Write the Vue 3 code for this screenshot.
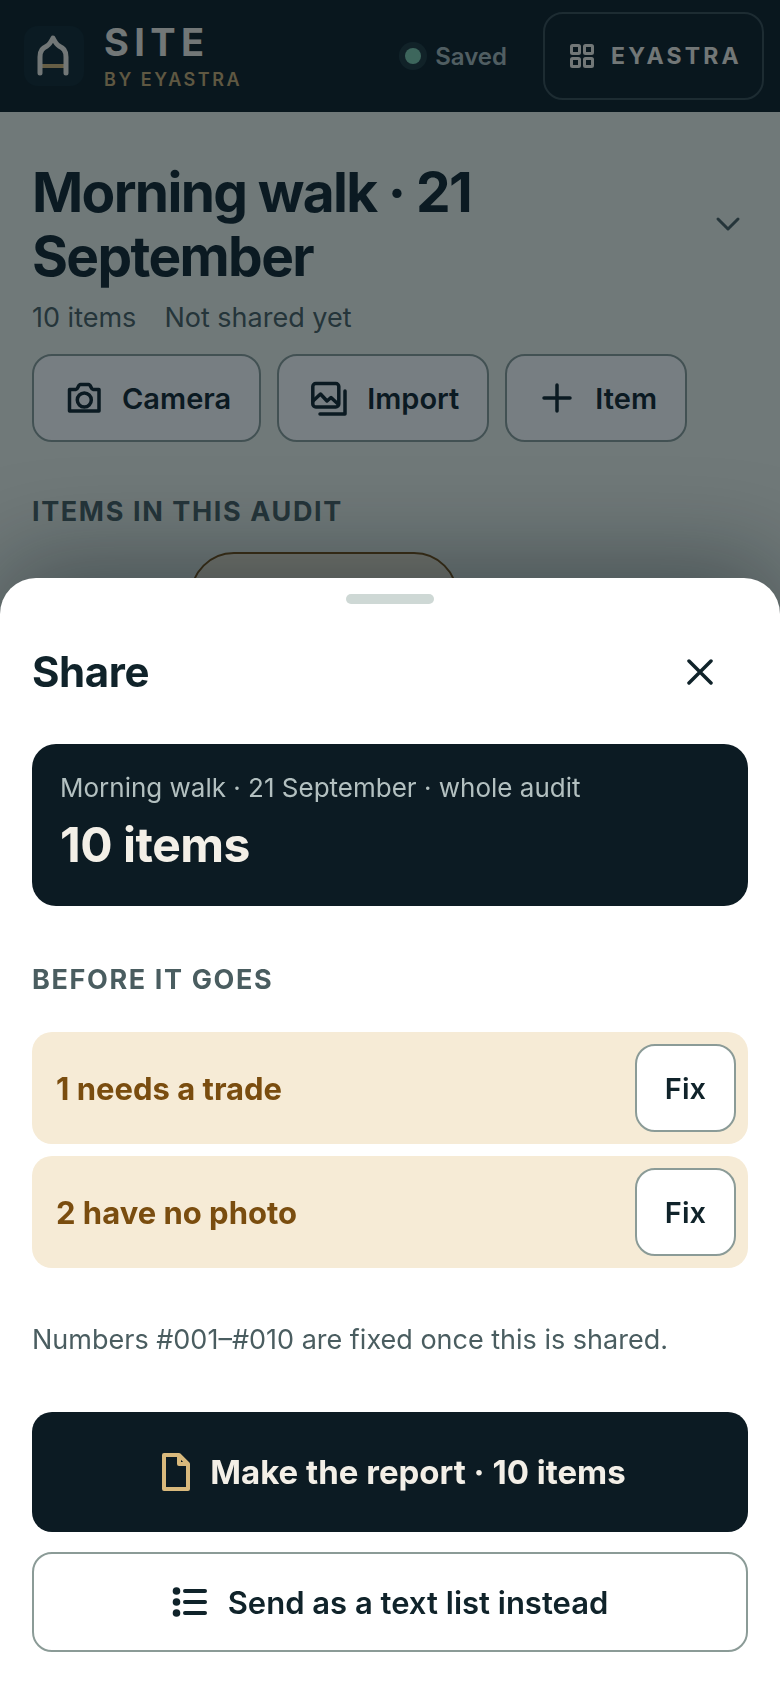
<script setup>
import { ref } from 'vue'

const title = 'Morning walk · 21 September'
const count = ref(10)
const checks = ['1 needs a trade', '2 have no photo']
</script>

<template>
  <div class="app">
    <header class="topbar">
      <svg class="logo" viewBox="0 0 60 60" aria-hidden="true">
        <rect width="60" height="60" rx="14" fill="#10252d" />
        <path d="M18 40h22" fill="none" stroke="#d9b978" stroke-width="4" />
        <path d="M16 47V31C16 24 19 22 23 20C26 18 27 16 29 12C31 16 32 18 35 20C39 22 42 24 42 31V47" fill="none" stroke="#f3efe7" stroke-width="5" stroke-linecap="round" stroke-linejoin="round" />
      </svg>
      <div class="brand">
        <span class="brand-name">SITE</span>
        <span class="brand-by">BY EYASTRA</span>
      </div>
      <span class="status"><i class="dot"></i>Saved</span>
      <button class="org" type="button">
        <svg width="26" height="26" viewBox="0 0 26 26" fill="none" stroke="currentColor" stroke-width="3" aria-hidden="true">
          <rect x="2.500" y="2.500" width="8" height="8" rx="1" />
          <rect x="15.500" y="2.500" width="8" height="8" rx="1" />
          <rect x="2.500" y="15.500" width="8" height="8" rx="1" />
          <rect x="15.500" y="15.500" width="8" height="8" rx="1" />
        </svg>
        EYASTRA
      </button>
    </header>

    <main class="page">
      <div class="heading">
        <h1>{{ title }}</h1>
        <button class="chevron" type="button" aria-label="Switch audit">
          <svg width="40" height="40" viewBox="0 0 40 40" fill="none" stroke="currentColor" stroke-width="3" stroke-linecap="round" stroke-linejoin="round" aria-hidden="true">
            <path d="M10 15l10 10 10-10" />
          </svg>
        </button>
      </div>
      <p class="meta"><span>{{ count }} items</span><span>Not shared yet</span></p>
      <div class="actions">
        <button class="outline action" type="button">
          <svg width="36" height="36" viewBox="0 0 36 36" fill="none" stroke="currentColor" stroke-width="3.500" stroke-linejoin="round" aria-hidden="true">
            <path d="M3.500 9.500h6.500c2 0 2-5 4.500-5h8c2.500 0 2.500 5 4.500 5h6v21.500h-29.500z" />
            <circle cx="18.300" cy="20" r="7" />
          </svg>
          Camera
        </button>
        <button class="outline action" type="button">
          <svg width="36" height="36" viewBox="0 0 36 36" fill="none" stroke="currentColor" stroke-width="3.500" stroke-linecap="round" stroke-linejoin="round" aria-hidden="true">
            <rect x="1.800" y="3.500" width="26" height="23.500" rx="3" />
            <path d="M2 21l7.500-7 6.500 7 4-3.500 7 6.500" />
            <path d="M34 11v23H9" />
          </svg>
          Import
        </button>
        <button class="outline action" type="button">
          <svg width="36" height="36" viewBox="0 0 36 36" fill="none" stroke="currentColor" stroke-width="3.500" stroke-linecap="round" aria-hidden="true">
            <path d="M18 5v26M5 18h26" />
          </svg>
          Item
        </button>
      </div>
      <h2 class="label">ITEMS IN THIS AUDIT</h2>
      <div class="chips"><span class="chip"></span></div>
    </main>

    <div class="scrim"></div>

    <section class="sheet" role="dialog" aria-labelledby="share-title">
      <div class="grip"></div>
      <div class="sheet-head">
        <h2 id="share-title">Share</h2>
        <button class="close" type="button" aria-label="Close">
          <svg width="36" height="36" viewBox="0 0 36 36" fill="none" stroke="currentColor" stroke-width="3.500" stroke-linecap="round" aria-hidden="true">
            <path d="M7 7l22 22M29 7L7 29" />
          </svg>
        </button>
      </div>
      <div class="summary">
        <p class="scope">{{ title }} · whole audit</p>
        <p class="total">{{ count }} items</p>
      </div>
      <h3 class="label">BEFORE IT GOES</h3>
      <ul class="checks">
        <li v-for="check in checks" :key="check">
          <span>{{ check }}</span>
          <button class="outline" type="button">Fix</button>
        </li>
      </ul>
      <p class="note">Numbers #001–#010 are fixed once this is shared.</p>
      <button class="primary" type="button">
        <svg width="40" height="40" viewBox="0 0 40 40" fill="none" stroke="#d9b97c" stroke-width="4" stroke-linejoin="round" aria-hidden="true">
          <path d="M10 3h15l9 9v25H10z" />
          <path d="M25 3v9h9" />
        </svg>
        Make the report · {{ count }} items
      </button>
      <button class="outline secondary" type="button">
        <svg width="36" height="36" viewBox="0 0 36 36" fill="none" stroke="currentColor" stroke-width="4" stroke-linecap="round" aria-hidden="true">
          <path d="M13 7h20M13 18h20M13 29h20" />
          <g fill="currentColor" stroke="none">
            <circle cx="4.500" cy="7" r="3.800" /><circle cx="4.500" cy="18" r="3.800" /><circle cx="4.500" cy="29" r="3.800" />
          </g>
        </svg>
        Send as a text list instead
      </button>
    </section>
  </div>
</template>

<style>
body {
  margin: 0;
  background: #eff4ec;
}
</style>

<style scoped>
.app {
  position: relative;
  min-height: 100vh;
  overflow: hidden;
  font-family: Inter, "Liberation Sans", sans-serif;
  font-size: 29px;
  color: #10232a;
}
h1, h2, h3, p, ul { margin: 0; padding: 0; }
svg { flex: none; display: block; }
button {
  display: flex;
  align-items: center;
  justify-content: center;
  font: inherit;
  color: inherit;
  border: 0;
  background: none;
  white-space: nowrap;
  padding: 0;
  cursor: pointer;
}
.topbar {
  display: flex;
  align-items: center;
  height: 112px;
  padding: 0 16px 0 24px;
  background: #0c1b23;
  color: #f3efe7;
}
.logo { width: 60px; height: 60px; }
.brand {
  display: flex;
  flex-direction: column;
  gap: 4px;
  margin-left: 20px;
  margin-right: auto;
}
.brand-name { font-size: 38px; line-height: 44px; font-weight: 700; letter-spacing: 0.14em; }
.brand-by { font-size: 18px; line-height: 24px; font-weight: 600; letter-spacing: 0.14em; color: #c9ab72; }
.status {
  display: flex;
  align-items: center;
  gap: 14px;
  margin-right: 36px;
  font-size: 24px;
  font-weight: 600;
  color: #a9b8b8;
}
.dot {
  width: 16px;
  height: 16px;
  border-radius: 50%;
  background: #7fc9ac;
  box-shadow: 0 0 0 6px #1d3439;
}
.org {
  gap: 16px;
  height: 88px;
  padding: 0 20px 0 24px;
  border: 2px solid #38494f;
  border-radius: 20px;
  font-size: 23px;
  font-weight: 700;
  letter-spacing: 0.14em;
}
.page { padding: 48px 32px 0; }
.heading { display: flex; align-items: center; justify-content: space-between; }
h1 { max-width: 560px; font-size: 55px; line-height: 64px; font-weight: 700; letter-spacing: -0.03em; }
.chevron { width: 40px; height: 88px; color: #4a5d60; }
.meta {
  display: flex;
  gap: 28px;
  margin-top: 8px;
  line-height: 44px;
  font-size: 27px;
  color: #4a5d60;
}
.actions { display: flex; gap: 16px; margin-top: 14px; }
.outline {
  height: 88px;
  border: 2px solid #8b9b97;
  border-radius: 20px;
  background: #fff;
  font-weight: 600;
}
.action { gap: 20px; padding: 0 28px 0 32px; }
.label {
  font-size: 27px;
  line-height: 40px;
  font-weight: 700;
  letter-spacing: 0.06em;
  color: #4a5d60;
}
.actions + .label { margin-top: 50px; }
.chips { display: flex; margin-top: 20px; padding-left: 158px; }
.chip {
  width: 268px;
  height: 88px;
  box-sizing: border-box;
  border: 2px solid #7a4d0f;
  border-radius: 44px;
  background: #f6ebd6;
}
.scrim { position: absolute; inset: 0; background: rgba(7, 20, 27, 0.55); }
.sheet {
  position: fixed;
  inset: auto 0 0;
  display: flex;
  flex-direction: column;
  padding: 16px 32px 36px;
  border-radius: 36px 36px 0 0;
  background: #fff;
  box-shadow: 0 -16px 96px rgba(8, 20, 26, 0.4);
}
.grip { align-self: center; width: 88px; height: 10px; border-radius: 5px; background: #ced8d5; }
.sheet-head { display: flex; align-items: center; justify-content: space-between; margin-top: 24px; }
.sheet-head h2 { font-size: 42px; line-height: 48px; font-weight: 700; letter-spacing: -0.01em; }
.close { width: 96px; height: 88px; }
.summary {
  margin-top: 28px;
  padding: 24px 28px 32px;
  border-radius: 24px;
  background: #0c1b23;
}
.scope { font-size: 26px; line-height: 40px; color: #b3c0c0; }
.total { margin-top: 8px; font-size: 48px; line-height: 58px; font-weight: 700; letter-spacing: -0.01em; color: #f3efe7; }
.summary + .label { margin-top: 54px; }
.checks { display: grid; gap: 12px; margin-top: 32px; list-style: none; }
.checks li {
  display: flex;
  align-items: center;
  justify-content: space-between;
  padding: 12px 12px 12px 24px;
  border-radius: 20px;
  background: #f6ebd6;
  color: #7a4d0f;
  font-size: 31px;
  font-weight: 700;
}
.checks button { padding: 0 28px; color: #10232a; font-size: 29px; }
.note { margin-top: 52px; font-size: 27px; line-height: 40px; color: #4a5d60; }
.primary {
  gap: 16px;
  height: 120px;
  margin-top: 52px;
  border-radius: 20px;
  background: #0c1b23;
  color: #f3efe7;
  font-size: 33px;
  font-weight: 700;
}
.secondary { gap: 20px; height: 100px; margin-top: 20px; font-size: 31px; }
</style>
